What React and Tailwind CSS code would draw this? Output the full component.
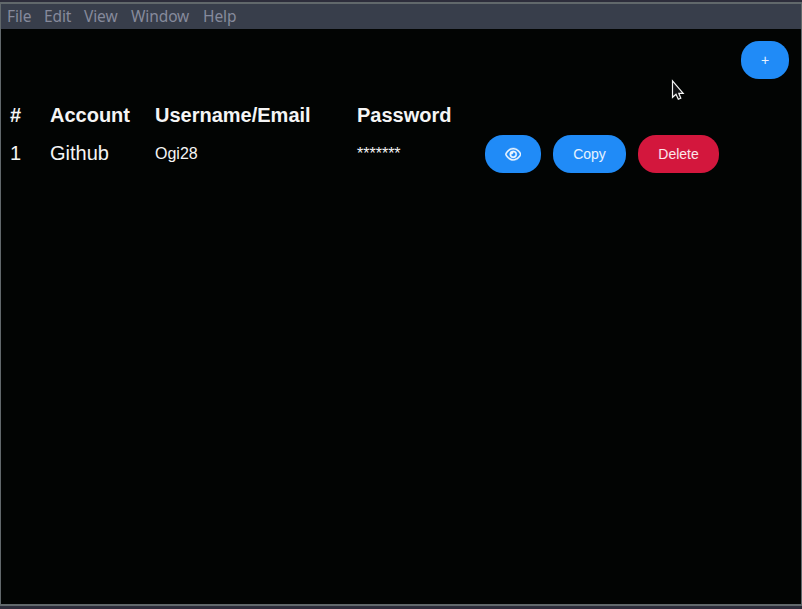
import { FaRegEye } from "react-icons/fa6";

const MENU = [
  { label: "File", box: "w-[37px]" },
  { label: "Edit", box: "w-[40px]" },
  { label: "View", box: "w-[47px]" },
  { label: "Window", box: "w-[72px]" },
  { label: "Help", box: "w-[40px]" },
];

function Button({ className = "", children, ...rest }) {
  return (
    <button
      className={`flex h-[38px] items-center justify-center rounded-[18px] text-sm text-white/90 ${className}`}
      {...rest}
    >
      {children}
    </button>
  );
}

function Cursor() {
  return (
    <svg className="absolute left-[671px] top-[79px]" width="14" height="23" viewBox="0 0 14 23" aria-hidden="true">
      <path
        d="M1.5 1.8V18.3L5 15.2L7.3 20.3L9.8 19.2L7.8 14.3H12.2Z"
        fill="#111214"
        stroke="#f4f4f4"
        strokeWidth="1.2"
      />
    </svg>
  );
}

export default function App() {
  return (
    <div className="relative flex h-[609px] w-[802px] flex-col overflow-hidden bg-[#2d2d3b] pt-[2px] pb-[3px] font-['Liberation_Sans',Arial,sans-serif] text-[#f5f5f5]">
      <div className="flex flex-1 flex-col border-x border-y-2 border-[#61686b] bg-[#020403]">
        <nav className="flex h-[25px] items-center bg-[#383e4b] pb-px pl-[6px] font-['Noto_Sans',sans-serif] text-[15.5px] text-[#868a9c]">
          {MENU.map((item) => (
            <span key={item.label} className={`whitespace-nowrap leading-6 tracking-[-0.1px] ${item.box}`}>
              {item.label}
            </span>
          ))}
        </nav>
        <div className="flex justify-end pt-3 pr-3">
          <Button className="w-12 bg-[#208bf7]">+</Button>
        </div>
        <main className="mt-[17px] pl-[9px]">
          <div className="grid h-[38px] grid-cols-[40px_105px_202px_128px_1fr] items-center text-xl font-bold">
            <span>#</span>
            <span>Account</span>
            <span>Username/Email</span>
            <span>Password</span>
          </div>
          <div className="mt-[1px] grid h-[38px] grid-cols-[40px_105px_202px_128px_1fr] items-center text-xl">
            <span className="pb-0.5">1</span>
            <span className="pb-0.5">Github</span>
            <span className="text-base">Ogi28</span>
            <span className="text-base">*******</span>
            <div className="flex gap-3">
              <Button className="w-14 bg-[#208bf7]" aria-label="Show password">
                <FaRegEye className="h-[14.5px] w-[16.5px] [stroke-width:12]" />
              </Button>
              <Button className="w-[73px] bg-[#208bf7]">Copy</Button>
              <Button className="w-[81px] bg-[#d3173d]">Delete</Button>
            </div>
          </div>
        </main>
      </div>
      <Cursor />
    </div>
  );
}
